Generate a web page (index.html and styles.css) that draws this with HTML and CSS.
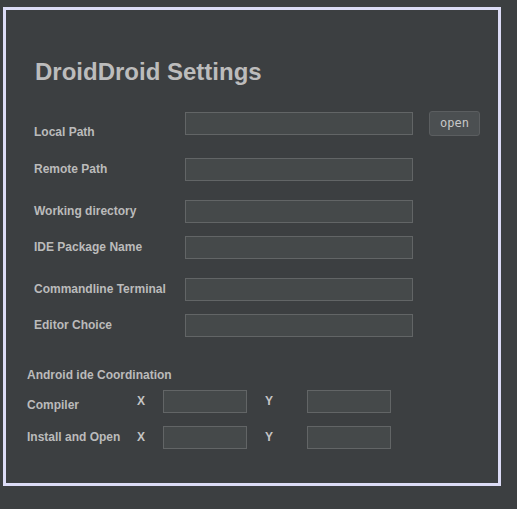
FILE: index.html
```html
<!DOCTYPE html>
<html lang="en">
<head>
<meta charset="utf-8">
<title>DroidDroid Settings</title>
<link rel="stylesheet" href="styles.css">
</head>
<body>
<div class="frame">
  <h1 class="title">DroidDroid Settings</h1>
  <div class="settings">
    <div class="row row-first">
      <label class="label label-low">Local Path</label>
      <div class="field"></div>
      <button class="btn">open</button>
    </div>
    <div class="row row-2">
      <label class="label">Remote Path</label>
      <div class="field"></div>
    </div>
    <div class="row gap-lg">
      <label class="label">Working directory</label>
      <div class="field"></div>
    </div>
    <div class="row gap-sm">
      <label class="label">IDE Package Name</label>
      <div class="field"></div>
    </div>
    <div class="row gap-lg">
      <label class="label">Commandline Terminal</label>
      <div class="field"></div>
    </div>
    <div class="row gap-sm">
      <label class="label">Editor Choice</label>
      <div class="field"></div>
    </div>
  </div>
  <div class="coords">
    <div class="coords-title">Android ide Coordination</div>
    <div class="coord-row coord-first">
      <span class="label coord-label label-compiler">Compiler</span>
      <span class="axis">X</span>
      <div class="field small"></div>
      <span class="axis axis-y">Y</span>
      <div class="field small"></div>
    </div>
    <div class="coord-row gap-sm">
      <span class="label coord-label">Install and Open</span>
      <span class="axis">X</span>
      <div class="field small"></div>
      <span class="axis axis-y">Y</span>
      <div class="field small"></div>
    </div>
  </div>
</div>
</body>
</html>
```

FILE: styles.css
```css
html, body {
  margin: 0;
  padding: 0;
  background: #3c3f41;
}

body {
  font-family: "Liberation Sans", Arial, sans-serif;
  color: #bbbbbb;
  padding: 7px 0 0 3px;
}

.frame {
  box-sizing: border-box;
  width: 498px;
  height: 479px;
  border: 3px solid #dcdcf6;
  background: #3c3f41;
  padding-top: 48px;
}

.title {
  margin: 0;
  padding-left: 29px;
  font-size: 24px;
  line-height: 28px;
  font-weight: bold;
  color: #bcbcbc;
}

.settings {
  padding-left: 28px;
  margin-top: 25px;
}

.row {
  display: flex;
  align-items: center;
}

.row-first {
  height: 25px;
}

.row-2 {
  margin-top: 22px;
}

.gap-lg {
  margin-top: 19px;
}

.gap-sm {
  margin-top: 13px;
}

.label {
  display: block;
  width: 151px;
  font-size: 12px;
  line-height: 23px;
  font-weight: bold;
  color: #bbbbbb;
}

.label-low {
  padding-top: 17px;
  line-height: 14px;
}

.field {
  box-sizing: border-box;
  flex: none;
  width: 228px;
  height: 23px;
  background: #45494a;
  border: 1px solid #626566;
}

.btn {
  box-sizing: border-box;
  margin-left: 16px;
  width: 51px;
  height: 25px;
  padding: 0;
  border: 1px solid #5b5e60;
  border-radius: 3px;
  background: #4b4f51;
  color: #c8c8c8;
  font-family: "DejaVu Sans Mono", "Liberation Mono", monospace;
  font-size: 12px;
  font-weight: normal;
  line-height: 23px;
}

.coords {
  padding-left: 21px;
  margin-top: 31px;
}

.coords-title {
  font-size: 12px;
  line-height: 14px;
  font-weight: bold;
  color: #bbbbbb;
}

.coord-row {
  display: flex;
  align-items: center;
  height: 23px;
}

.coord-first {
  margin-top: 8px;
}

.coord-label {
  width: 110px;
}

.label-compiler {
  padding-top: 8px;
}

.axis {
  width: 26px;
  font-size: 12px;
  font-weight: bold;
  line-height: 23px;
  color: #c4c4c4;
}

.axis-y {
  width: 42px;
  margin-left: 18px;
}

.field.small {
  width: 84px;
}
```
